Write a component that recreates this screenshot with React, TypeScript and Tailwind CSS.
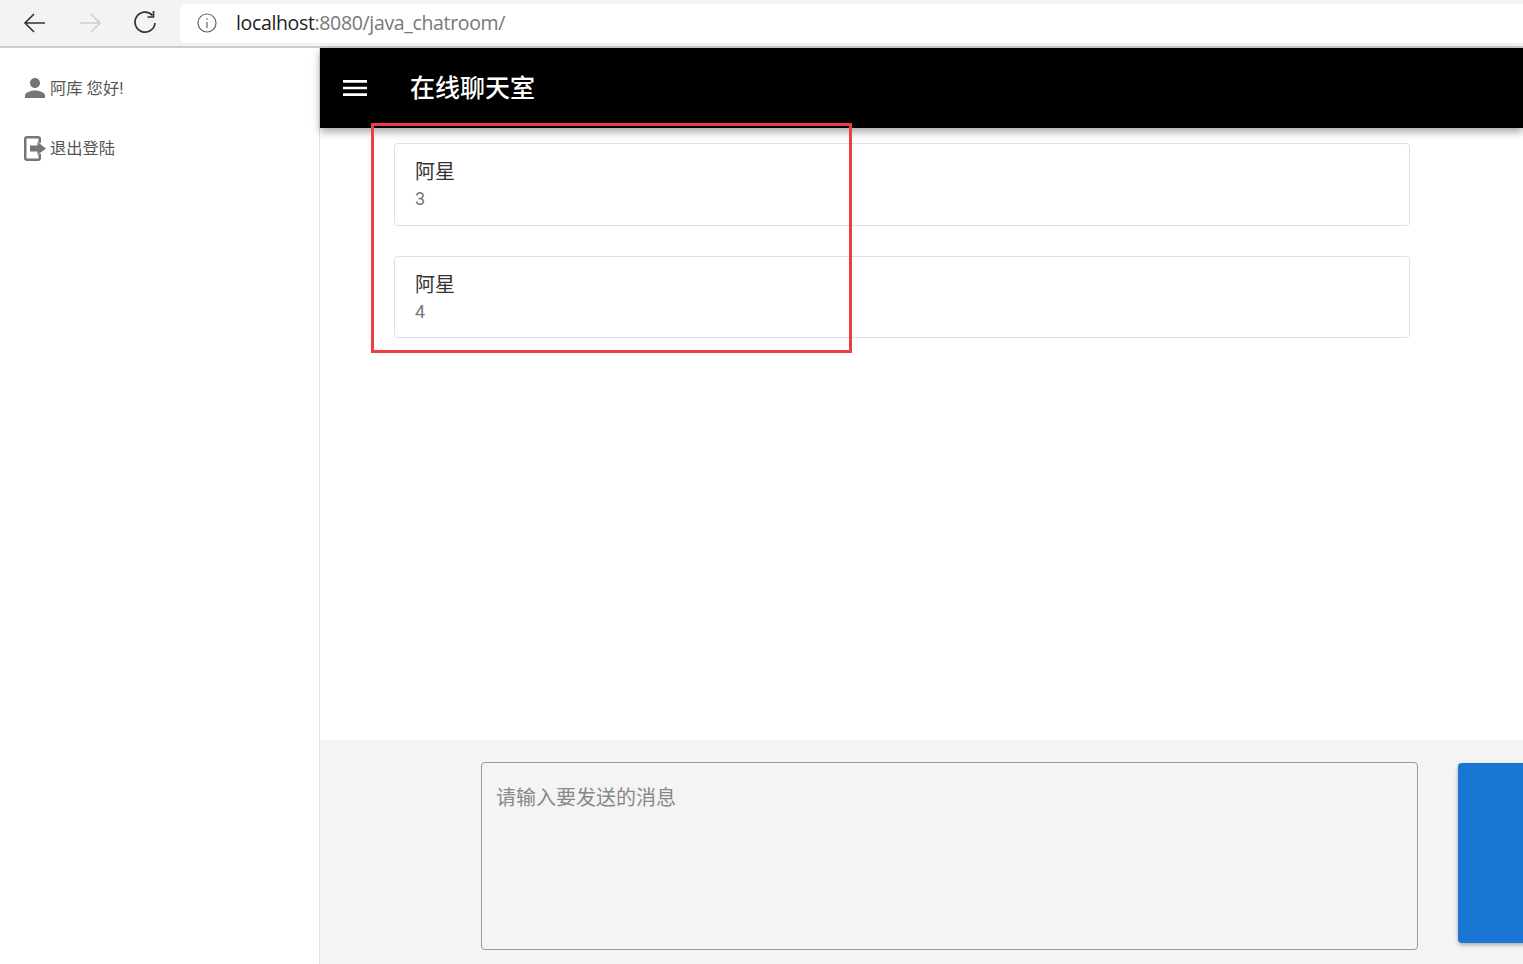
const cjk = "font-['Roboto','Noto_Sans_CJK_SC',sans-serif]";

function BrowserBar() {
  return (
    <div className="flex h-[48px] shrink-0 items-start border-b-2 border-[#cdcdcd] bg-[#f3f3f3] pt-1">
      <div className="flex h-[38px] w-[180px] shrink-0 items-center pl-[22px]">
        <svg width="26" height="24" viewBox="0 0 26 24" fill="none" stroke="#333" strokeWidth="1.6">
          <path d="M23 12H3M12 3l-9 9 9 9" />
        </svg>
        <svg className="ml-[29px]" width="26" height="24" viewBox="0 0 26 24" fill="none" stroke="#cfcfcf" strokeWidth="1.6">
          <path d="M3 12h20M14 3l9 9-9 9" />
        </svg>
        <svg className="ml-[29px]" width="26" height="26" viewBox="0 0 26 26" fill="none" stroke="#333" strokeWidth="1.7">
          <path d="M20.5 5.5A10 10 0 1 0 23 13" />
          <path d="M21.5 1v6h-6" />
        </svg>
      </div>
      <div className="flex h-[39px] flex-1 items-center rounded-l-md bg-white pb-[2px] pl-[17px]">
        <svg width="20" height="20" viewBox="0 0 20 20" fill="none" stroke="#666" strokeWidth="1.2">
          <circle cx="10" cy="10" r="9" />
          <path d="M10 9v6M10 5.2v1.6" />
        </svg>
        <span className="ml-[19px] font-['Open_Sans',sans-serif] text-[19.5px] tracking-[-0.35px] text-[#777]">
          <span className="text-[#222]">localhost</span>:8080/java_chatroom/
        </span>
      </div>
    </div>
  );
}

function Sidebar() {
  return (
    <aside className={`w-[320px] shrink-0 border-r border-[#e2e2e2] bg-white text-[#555] ${cjk}`}>
      <div className="mt-[25px] flex h-[30px] items-center pl-[20px]">
        <svg width="30" height="30" viewBox="0 0 24 24" fill="#757575">
          <path d="M12 12c2.21 0 4-1.79 4-4s-1.79-4-4-4-4 1.79-4 4 1.79 4 4 4zm0 2c-2.67 0-8 1.34-8 4v2h16v-2c0-2.66-5.33-4-8-4z" />
        </svg>
        <span className="pt-[2px] text-[16.3px]">阿库 您好!</span>
      </div>
      <div className="mt-[30px] flex h-[30px] items-center pl-[24px]">
        <svg width="22" height="25" viewBox="0 0 22 25" fill="#757575">
          <path d="M3 0h11a3 3 0 0 1 3 3v4h-2.5V2.5h-12v20h12V18H17v4a3 3 0 0 1-3 3H3a3 3 0 0 1-3-3V3a3 3 0 0 1 3-3z" />
          <path d="M6 9.5h7.5V6l8.5 6.5-8.5 6.5v-3.5H6z" />
        </svg>
        <span className="ml-[4px] pt-[2px] text-[16.3px]">退出登陆</span>
      </div>
    </aside>
  );
}

function MessageCard({ name, text, height }: { name: string; text: string; height: string }) {
  return (
    <div className={`${height} w-[1016px] rounded border border-[#e0e0e0] bg-white pl-[20px] pt-[15px]`}>
      <div className="text-[20px] leading-[27px] text-[#333]">{name}</div>
      <div className="-mt-[1px] text-[18px] leading-[27px] text-[#777]">{text}</div>
    </div>
  );
}

export default function App() {
  return (
    <div className={`relative flex h-[964px] w-[1523px] flex-col overflow-hidden bg-white ${cjk}`}>
      <BrowserBar />
      <div className="flex min-h-0 flex-1">
        <Sidebar />
        <main className="flex min-w-0 flex-1 flex-col">
          <header className="z-10 flex h-[80px] shrink-0 items-center bg-black pl-[19px] shadow-[0_4px_8px_rgba(0,0,0,0.35)]">
            <svg width="32" height="32" viewBox="0 0 24 24" fill="#fff">
              <path d="M3 18h18v-2H3v2zm0-5h18v-2H3v2zm0-7v2h18V6H3z" />
            </svg>
            <h1 className="ml-[39px] pt-[2px] text-[25px] font-medium text-white">在线聊天室</h1>
          </header>
          <div className="flex min-h-0 flex-1 flex-col gap-[30px] pl-[74px] pt-[15px]">
            <MessageCard name="阿星" text="3" height="h-[83px]" />
            <MessageCard name="阿星" text="4" height="h-[82px]" />
          </div>
          <footer className="flex h-[224px] shrink-0 items-start bg-[#f4f4f4] pl-[161px] pt-[22px]">
            <div className="h-[188px] w-[937px] shrink-0 rounded border border-[#999] pl-[14px] pt-[21px] text-[20px] leading-[28px] text-[#888]">
              请输入要发送的消息
            </div>
            <button className="ml-[40px] mt-[1px] h-[180px] w-[120px] shrink-0 rounded bg-[#1976d2] shadow-[0_2px_4px_rgba(0,0,0,0.3)]" />
          </footer>
        </main>
      </div>
      <div className="pointer-events-none absolute left-[371px] top-[123px] z-20 h-[230px] w-[481px] border-[3px] border-[#ea3e42]" />
    </div>
  );
}
